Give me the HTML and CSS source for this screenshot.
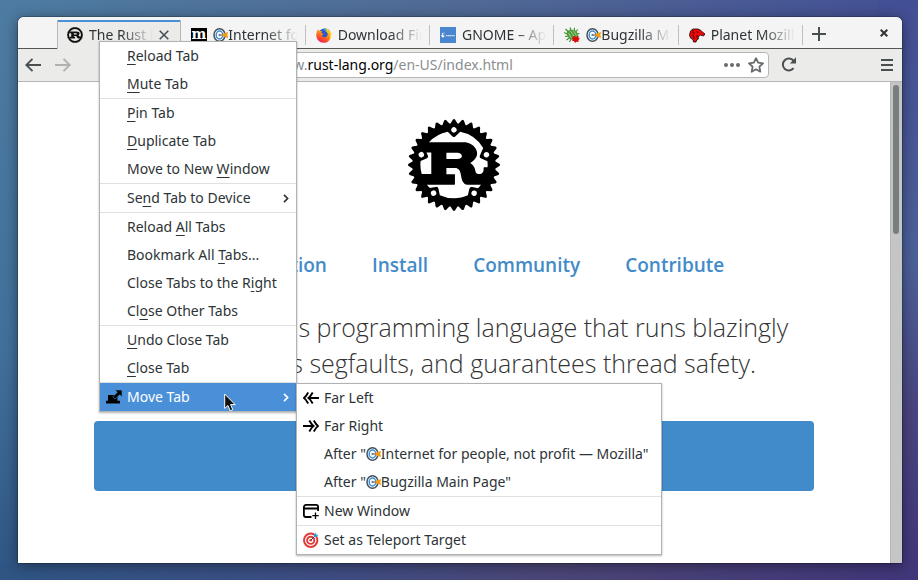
FILE: index.html
```html
<!DOCTYPE html>
<html lang="en">
<head>
<meta charset="utf-8">
<title>The Rust Programming Language</title>
<link rel="stylesheet" href="styles.css">
</head>
<body>
<svg class="defs" aria-hidden="true">
  <symbol id="rust" viewBox="0 0 24 24"><path d="M23.8346 11.7033l-1.0073-.6236a13.7268 13.7268 0 00-.0283-.2936l.8656-.8069a.3483.3483 0 00-.1154-.578l-1.1066-.414a8.4958 8.4958 0 00-.087-.2856l.6904-.9587a.3462.3462 0 00-.2257-.5446l-1.1663-.1894a9.3574 9.3574 0 00-.1407-.2622l.49-1.0761a.3437.3437 0 00-.0274-.3361.3486.3486 0 00-.3006-.154l-1.1845.0416a6.7444 6.7444 0 00-.1873-.2268l.2723-1.153a.3472.3472 0 00-.417-.4172l-1.1532.2724a14.0183 14.0183 0 00-.2278-.1873l.0415-1.1845a.3442.3442 0 00-.49-.328l-1.076.491c-.0872-.0476-.1742-.0952-.2623-.1407l-.1903-1.1673A.3483.3483 0 0016.256.955l-.9597.6905a8.4867 8.4867 0 00-.2855-.086l-.414-1.1066a.3483.3483 0 00-.5781-.1154l-.8069.8666a9.2936 9.2936 0 00-.2936-.0284L12.2946.1683a.3462.3462 0 00-.5892 0l-.6236 1.0073a13.7383 13.7383 0 00-.2936.0284L9.9803.3374a.3462.3462 0 00-.578.1154l-.4141 1.1065c-.0962.0274-.1903.0567-.2855.086L7.744.955a.3483.3483 0 00-.5447.2258L7.009 2.348a9.3574 9.3574 0 00-.2622.1407l-1.0762-.491a.3462.3462 0 00-.49.328l.0416 1.1845a7.9826 7.9826 0 00-.2278.1873L3.8413 3.425a.3472.3472 0 00-.4171.4171l.2713 1.1531c-.0628.075-.1255.1509-.1863.2268l-1.1845-.0415a.3462.3462 0 00-.328.49l.491 1.0761a9.167 9.167 0 00-.1407.2622l-1.1662.1894a.3483.3483 0 00-.2258.5446l.6904.9587a13.303 13.303 0 00-.087.2855l-1.1065.414a.3483.3483 0 00-.1155.5781l.8656.807a9.2936 9.2936 0 00-.0283.2935l-1.0073.6236a.3442.3442 0 000 .5892l1.0073.6236c.008.0982.0182.1964.0283.2936l-.8656.8079a.3462.3462 0 00.1155.578l1.1065.4141c.0273.0962.0567.1914.087.2855l-.6904.9587a.3452.3452 0 00.2268.5447l1.1662.1893c.0456.088.0922.1751.1408.2622l-.491 1.0762a.3462.3462 0 00.328.49l1.1834-.0415c.0618.0769.1235.1528.1873.2277l-.2713 1.1541a.3462.3462 0 00.4171.4161l1.153-.2713c.075.0638.151.1255.2279.1863l-.0415 1.1845a.3442.3442 0 00.49.327l1.0761-.49c.087.0486.1741.0951.2622.1407l.1903 1.1662a.3483.3483 0 00.5447.2268l.9587-.6904a9.299 9.299 0 00.2855.087l.414 1.1066a.3452.3452 0 00.5781.1154l.8079-.8656c.0972.0111.1954.0203.2936.0294l.6236 1.0073a.3472.3472 0 00.5892 0l.6236-1.0073c.0982-.0091.1964-.0183.2936-.0294l.8069.8656a.3483.3483 0 00.578-.1154l.4141-1.1066a8.4626 8.4626 0 00.2855-.087l.9587.6904a.3452.3452 0 00.5447-.2268l.1903-1.1662c.088-.0456.1751-.0931.2622-.1407l1.0762.49a.3472.3472 0 00.49-.327l-.0415-1.1845a6.7267 6.7267 0 00.2267-.1863l1.1531.2713a.3472.3472 0 00.4171-.416l-.2713-1.1542c.0628-.0749.1255-.1508.1863-.2278l1.1845.0415a.3442.3442 0 00.328-.49l-.49-1.076c.0475-.0872.0951-.1742.1407-.2623l1.1662-.1893a.3483.3483 0 00.2258-.5447l-.6904-.9587.087-.2855 1.1066-.414a.3462.3462 0 00.1154-.5781l-.8656-.8079c.0101-.0972.0202-.1954.0283-.2936l1.0073-.6236a.3442.3442 0 000-.5892zm-6.7413 8.3551a.7138.7138 0 01.2986-1.396.714.714 0 11-.2997 1.396zm-.3422-2.3142a.649.649 0 00-.7715.5l-.3573 1.6685c-1.1035.501-2.3285.7795-3.6193.7795a8.7368 8.7368 0 01-3.6951-.814l-.3574-1.6684a.648.648 0 00-.7714-.499l-1.473.3158a8.7216 8.7216 0 01-.7613-.898h7.1676c.081 0 .1356-.0141.1356-.088v-2.536c0-.074-.0536-.0881-.1356-.0881h-2.0966v-1.6077h2.2677c.2065 0 1.1065.0587 1.394 1.2088.0901.3533.2875 1.5044.4232 1.8729.1346.413.6833 1.2381 1.2685 1.2381h3.5716a.7492.7492 0 00.1296-.0131 8.7874 8.7874 0 01-.8119.9526zM6.8369 20.024a.714.714 0 11-.2997-1.396.714.714 0 01.2997 1.396zM4.1177 8.9972a.7137.7137 0 11-1.304.5791.7137.7137 0 011.304-.579zm-.8352 1.9813l1.5347-.6824a.65.65 0 00.33-.8585l-.3158-.7147h1.2432v5.6025H3.5669a8.7753 8.7753 0 01-.2834-3.348zm6.7343-.5437V8.7836h2.9601c.153 0 1.0792.1772 1.0792.8697 0 .575-.7107.7815-1.2948.7815zm10.7574 1.4862c0 .2187-.008.4363-.0243.651h-.9c-.09 0-.1265.0586-.1265.1477v.413c0 .973-.5487 1.1846-1.0296 1.2382-.4576.0517-.9648-.1913-1.0275-.4717-.2704-1.5186-.7198-1.8436-1.4305-2.4034.8817-.5599 1.799-1.386 1.799-2.4915 0-1.1936-.819-1.9458-1.3769-2.3153-.7825-.5163-1.6491-.6195-1.883-.6195H5.4682a8.7651 8.7651 0 014.907-2.7699l1.0974 1.151a.648.648 0 00.9182.0213l1.227-1.1743a8.7753 8.7753 0 016.0044 4.2762l-.8403 1.8982a.652.652 0 00.33.8585l1.6178.7188c.0283.2875.0425.577.0425.8717zm-9.3006-9.5993a.7128.7128 0 11.984 1.0316.7137.7137 0 01-.984-1.0316zm8.3389 6.71a.7107.7107 0 01.9395-.3625.7137.7137 0 11-.9405.3635z"/></symbol>
  <symbol id="rust-small" viewBox="0 0 16 16">
    <circle cx="8" cy="8" r="6.8" fill="none" stroke="#111" stroke-width="1.7"/>
    <circle cx="8" cy="8" r="7.6" fill="none" stroke="#111" stroke-width=".8" stroke-dasharray=".9 .7"/>
    <path fill="#111" fill-rule="evenodd" d="M2.5 4.6h7.2c1.800 0 2.900.7 2.900 1.900 0 .9-.6 1.500-1.300 1.800.8.400.9 1.200 1.500 1.300h1.200v1.800h-2.900c-1.200 0-1.300-2-2.200-2.300H6.800v.7h1.300v1.600H2.700V9.800h1.500V6.300H2.300zM6.800 6.200v1.300h2.400c.9 0 .9-1.300 0-1.300z"/>
  </symbol>
  <symbol id="dart" viewBox="0 0 15 16">
    <ellipse cx="6.500" cy="8" rx="5.500" ry="6.300" fill="#fff" stroke="#46525c" stroke-width="1.500"/>
    <ellipse cx="6.500" cy="8" rx="3.300" ry="3.900" fill="#fff" stroke="#3d8fd6" stroke-width="1.500"/>
    <circle cx="6.500" cy="8" r="1.300" fill="#6fb1e6"/>
    <path d="M6 8h4" stroke="#8d4b42"/>
    <path d="M9 8l2-2.300 1 .9 2.800-1.900v2.200l-.8 1.100.8 1.100v2.200L12 9.400l-1 .9z" fill="#f39c12"/>
  </symbol>
  <symbol id="chevron" viewBox="0 0 6 9"><path d="M1 .8l3.600 3.700L1 8.200" fill="none" stroke="currentColor" stroke-width="1.700"/></symbol>
</svg>

<div class="window">
  <header class="tabbar">
    <div class="tabs" role="tablist">
      <div class="tab active" role="tab" aria-selected="true">
        <svg class="icon"><use href="#rust-small"/></svg>
        <span class="label">The Rust Programming</span>
        <button class="close-tab" aria-label="Close tab"><svg width="10" height="10" viewBox="0 0 10 10"><path d="M.7.700l8.600 8.600M9.300.7L.7 9.300" stroke="#4a4f51" stroke-width="1.600"/></svg></button>
      </div>
      <div class="tab" role="tab">
        <svg class="icon" viewBox="0 0 16 16"><path d="M0 1h16v14H0z"/><text x="8" y="12" text-anchor="middle" class="m-logo">m</text></svg>
        <span class="label"><svg class="dart"><use href="#dart"/></svg>Internet for people</span>
      </div>
      <div class="tab" role="tab">
        <svg class="icon" viewBox="0 0 16 16">
          <defs><linearGradient id="fx" x1=".8" y1="0" x2=".3" y2="1"><stop offset="0" stop-color="#ffe226"/><stop offset=".4" stop-color="#ff9a16"/><stop offset=".75" stop-color="#ff4a2e"/><stop offset="1" stop-color="#e51a62"/></linearGradient></defs>
          <circle cx="8.500" cy="7.500" r="6" fill="#2b57c8"/><path d="M7 2c2-1 5-.5 6.300 1.500l-3 2z" fill="#3c9be8"/>
          <path d="M2.200 2.200C2.500 3.200 3 3.700 3.600 4c1-.2 1.900 0 2.500.3L5.300 6c.9.500 1.700.6 2.300.9-.4 1-1.500 1.200-1.800 1.600.4 1.800 3.400 2.400 5 .9 1.200-1.200 1.200-3-.2-4.700 0-1.500-.6-2.700-1.500-3.700 2 .3 3.300 1.400 4 2.600.900.300 1.500 1 2 2.300.8 5.500-2.600 9.900-7.300 9.900-4.300 0-7.500-3.500-7.500-7.500 0-2.600.8-4.900 1.900-6.100z" fill="url(#fx)"/>
          <path d="M13.300 3.700c.8.300 1.500 1 1.900 2.300.5 2.600-.4 5.300-1.700 6.800.9-3.200.6-6.500-.2-9.100z" fill="#ffe12b"/>
        </svg>
        <span class="label">Download Firefox</span>
      </div>
      <div class="tab" role="tab">
        <svg class="icon" viewBox="0 0 16 16"><path d="M0 0h16v16H0z" fill="#4a86cf"/><path d="M1.800 9.800c-1-1.300-.2-2.600 1-2.500 1 .1.900 1.200.2 1.400L4.600 8.600c.1 1-.9 2.100-2 1.900z" fill="#fff"/><circle cx="2.600" cy="6.300" r=".6" fill="#fff"/><circle cx="4" cy="6" r=".5" fill="#fff"/><path d="M6 8.600h9" stroke="#d8e6f6" stroke-width="1.400" stroke-dasharray="1.400 .4"/></svg>
        <span class="label">GNOME – Apps</span>
      </div>
      <div class="tab" role="tab">
        <svg class="icon" viewBox="0 0 16 16"><path d="M1.500 2l3 3M6 .5l1.500 4M10.500.8l-.5 4M13.800 2.500l-3 3.500M0 5.500l4 2M15.500 6.500l-4 .5M1 9.500l4-.5M2.500 13l4-3M5.500 15l2-4" stroke="#3c8d2c" stroke-width="1.100"/><path d="M3 4.500C5 2.500 9 2 11.500 3.500c2 1.500 3.500 5 2.500 8-3 2-7 1.800-9-.5-2-2-3-4.500-2-6.500z" fill="#4f9c3c"/><path d="M4.500 6l3 5M6.500 4l4 6M9.500 3.700l3 5" stroke="#a5d18c" stroke-width="1"/><path d="M8 10.500l2-1.500 2 1 2.500-1v2l1.500.5-1.500 1.500v2l-2-.3-1.500 1.300-1-2H8l.8-1.700z" fill="#e00b0b"/></svg>
        <span class="label"><svg class="dart"><use href="#dart"/></svg>Bugzilla Main Page</span>
      </div>
      <div class="tab" role="tab">
        <svg class="icon" viewBox="0 0 16 16"><path d="M1.500 4L4 2h5l3 1.500 2 2 2 1.500-1.500 2L11.500 8 9 10l.5 2-1.500.500-1 2.500H4.500L4 12.500 1.500 11 .5 8z" fill="#ee0808" stroke="#160000" stroke-width=".8"/><path d="M4 3v3h2M8 4l1 2M3 8l2 1v3M8 8v3" stroke="#5b0000" fill="none"/></svg>
        <span class="label">Planet Mozilla</span>
      </div>
    </div>
    <button class="new-tab" aria-label="New tab"><svg width="14" height="14" viewBox="0 0 14 14"><path d="M7 0v14M0 7h14" stroke="#4a4f51" stroke-width="2"/></svg></button>
    <button class="close-window" aria-label="Close window"><svg width="8" height="8" viewBox="0 0 8 8"><path d="M.7.700l6.600 6.600M7.300.7L.7 7.300" stroke="#2e3436" stroke-width="2"/></svg></button>
  </header>

  <nav class="toolbar">
    <button aria-label="Back"><svg width="16" height="14" viewBox="0 0 16 14"><path d="M16 7H1.500M7.500.8L1.300 7l6.200 6.200" fill="none" stroke="#4a4f51" stroke-width="1.900"/></svg></button>
    <button aria-label="Forward" disabled><svg width="16" height="14" viewBox="0 0 16 14"><path d="M0 7h14.500M8.500.8L14.700 7l-6.200 6.200" fill="none" stroke="#b0b1b0" stroke-width="1.900"/></svg></button>
    <div class="urlbar">
      <div class="url" role="textbox" aria-label="Address" contenteditable="true" spellcheck="false">https://www.<b>rust-lang.org</b>/en-US/index.html</div>
      <button aria-label="Page actions"><svg width="16" height="4" viewBox="0 0 16 4"><path d="M2 2h0M8 2h0M14 2h0" stroke="#666b6d" stroke-width="4" stroke-linecap="round"/></svg></button>
      <button aria-label="Bookmark this page"><svg width="16" height="16" viewBox="0 0 16 16"><path d="M8 1.200l2.100 4.500 4.900.6-3.600 3.400.9 5L8 12.300l-4.300 2.400.9-5L1 6.300l4.900-.6z" fill="none" stroke="#666b6d" stroke-width="1.800" stroke-linejoin="round"/></svg></button>
    </div>
    <button class="reload" aria-label="Reload"><svg width="16" height="15" viewBox="0 0 16 15"><path d="M12.600 11.200A6 6 0 1 1 12.500 3.700" fill="none" stroke="#4a4f51" stroke-width="2"/><path d="M15 .3v6.200H8.800z" fill="#4a4f51"/></svg></button>
    <button class="menu-button" aria-label="Open menu"><svg width="12" height="12" viewBox="0 0 12 12"><path d="M0 1h12M0 6h12M0 11h12" stroke="#4a4f51" stroke-width="2"/></svg></button>
  </nav>

  <div class="viewport">
    <main class="page">
      <svg class="logo" role="img" aria-label="Rust"><use href="#rust"/></svg>
      <nav class="links">
        <a href="#">Documentation</a>
        <a href="#">Install</a>
        <a href="#">Community</a>
        <a href="#">Contribute</a>
      </nav>
      <p class="tagline">Rust is a systems programming language that runs blazingly<br>fast, prevents segfaults, and guarantees thread safety.</p>
      <button class="install" aria-label="Install Rust"></button>
    </main>
    <div class="scrollbar"><div class="thumb"></div></div>
  </div>

  <div class="menu context" role="menu">
    <button role="menuitem"><span><u>R</u>eload Tab</span></button>
    <button role="menuitem"><span><u>M</u>ute Tab</span></button>
    <hr>
    <button role="menuitem"><span><u>P</u>in Tab</span></button>
    <button role="menuitem"><span><u>D</u>uplicate Tab</span></button>
    <button role="menuitem"><span>Move to New <u>W</u>indow</span></button>
    <hr>
    <button role="menuitem"><span>Se<u>n</u>d Tab to Device</span><svg class="chevron"><use href="#chevron"/></svg></button>
    <hr>
    <button role="menuitem"><span>Reload <u>A</u>ll Tabs</span></button>
    <button role="menuitem"><span>Bookmark All <u>T</u>abs...</span></button>
    <button role="menuitem"><span>Close Tabs to the R<u>i</u>ght</span></button>
    <button role="menuitem"><span>Cl<u>o</u>se Other Tabs</span></button>
    <hr>
    <button role="menuitem"><span><u>U</u>ndo Close Tab</span></button>
    <button role="menuitem"><span><u>C</u>lose Tab</span></button>
    <hr>
    <div class="parent">
      <button role="menuitem" class="selected" aria-haspopup="true" aria-expanded="true">
        <svg class="icon" viewBox="0 0 16 16"><path d="M2 6h9.500v5.800H14v2.700H0v-2.700h2z"/><path d="M9 1h7v7l-2.300-2.300-4.500 4.500-2.400-2.400 4.500-4.500z" stroke="#4a90d9" stroke-width=".6"/></svg>
        <span>Move Tab</span><svg class="chevron"><use href="#chevron"/></svg>
      </button>
      <svg class="pointer" viewBox="0 0 12 19"><path d="M.7 1v14.500l3.200-3 2.300 5.300 2.600-1.100-2.200-5.100h4.600z" fill="#111" stroke="#fff"/></svg>
      <div class="menu submenu" role="menu">
        <button role="menuitem"><svg class="icon" viewBox="0 0 16 16"><path d="M5.200 2.500C3.500 5.500 2.500 7 1 8c1.500 1 2.500 2.500 4.200 5.500M9.700 2.500C8 5.500 7 7 5.500 8 7 9 8 10.500 9.700 13.500M6 8h10" fill="none" stroke="#000" stroke-width="1.900"/></svg><span>Far Left</span></button>
        <button role="menuitem"><svg class="icon" viewBox="0 0 16 16"><path d="M10.800 2.500C12.500 5.500 13.500 7 15 8c-1.500 1-2.500 2.500-4.200 5.500M6.300 2.500C8 5.500 9 7 10.500 8 9 9 8 10.500 6.300 13.500M10 8H0" fill="none" stroke="#000" stroke-width="1.900"/></svg><span>Far Right</span></button>
        <button role="menuitem"><span>After "<svg class="dart"><use href="#dart"/></svg>Internet for people, not profit — Mozilla"</span></button>
        <button role="menuitem"><span>After "<svg class="dart"><use href="#dart"/></svg>Bugzilla Main Page"</span></button>
        <hr>
        <button role="menuitem"><svg class="icon" viewBox="0 0 16 16"><path d="M8.500 14H3A2.100 2.100 0 0 1 .9 11.900V4A2.100 2.100 0 0 1 3 1.900h10A2.100 2.100 0 0 1 15.100 4v4M1 5.500h14" fill="none" stroke="#000" stroke-width="1.800"/><path d="M12.500 9.500v6.500M9.300 12.700h6.400" stroke="#000" stroke-width="1.300"/></svg><span>New Window</span></button>
        <hr>
        <button role="menuitem"><svg class="icon" viewBox="0 0 16 16"><circle cx="7.700" cy="8.300" r="6.700" fill="#fff" stroke="#e13b38" stroke-width="2"/><circle cx="7.700" cy="8.300" r="3.600" fill="#fff" stroke="#e13b38" stroke-width="1.900"/><circle cx="7.700" cy="8.300" r="1.300" fill="#e13b38"/><path d="M7.700 8.300l4.500-4.500" stroke="#33424a" stroke-width="1"/><path d="M11 5V2.800L13.200.6v2.200h2.300L13.300 5z" fill="#27a3d6"/></svg><span>Set as Teleport Target</span></button>
      </div>
    </div>
  </div>
</div>
</body>
</html>
```
FILE: styles.css
```css
* { box-sizing: border-box; }

body {
  margin: 0;
  min-height: 100vh;
  padding: 17px 16px 17px 18px;
  display: flex;
  font-family: "Noto Sans", "Open Sans", sans-serif;
  font-size: 14px;
  color: #2e3436;
  background:
    linear-gradient(to right, #2f5584 0%, #3d4d83 35%, #4b4677 60%, #40367a 100%) bottom / 100% 17px no-repeat,
    linear-gradient(to bottom, #434f94 0%, #4c6199 45%, #4a4580 70%, #40367a 100%) right / 40px 100% no-repeat,
    linear-gradient(to bottom, #4d7ba1, #41709b 60%, #2f5584) left / 40px 100% no-repeat,
    linear-gradient(to right, #4d7ba1, #506a95 50%, #434f94);
}

button {
  margin: 0;
  padding: 0;
  border: 0;
  background: none;
  font: inherit;
  color: inherit;
  display: flex;
  align-items: center;
}

svg { display: block; flex: none; }
.defs { position: absolute; width: 0; height: 0; }
.icon { width: 16px; height: 16px; }
.m-logo { font: bold 14px "DejaVu Serif", serif; fill: #fff; }

.window {
  position: relative;
  flex: 1;
  min-width: 0;
  display: flex;
  flex-direction: column;
  background: #fff;
  border-radius: 6px 6px 0 0;
  box-shadow: 0 0 0 1px rgba(0, 0, 0, .2), 0 2px 14px rgba(0, 0, 0, .45);
}

.tabbar {
  height: 32px;
  display: flex;
  padding-left: 39px;
  background: #f4f4f4;
  border-bottom: 1px solid #55574f;
  border-radius: 6px 6px 0 0;
}

.tabs {
  flex: 1;
  min-width: 0;
  display: grid;
  grid-template-columns: repeat(6, minmax(0, 1fr));
}

.tab {
  position: relative;
  padding: 4px 8px 0 10px;
  display: flex;
  align-items: center;
  gap: 6px;
}

.tab::after {
  content: "";
  width: 1px;
  height: 20px;
  position: absolute;
  right: 0;
  top: 8px;
  background: #c0c0be;
}

.tab.active {
  margin: 3px 0 -1px;
  padding: 0 11px 0 9px;
  background: #ebebe9;
  border: solid #b6b6b3;
  border-width: 0 1px;
  box-shadow: inset 0 2px #4a90d9;
}
.tab.active::after { display: none; }

.label {
  flex: 1;
  min-width: 0;
  overflow: hidden;
  white-space: nowrap;
  line-height: 22px;
  -webkit-mask-image: linear-gradient(to left, transparent, #000 32px);
  mask-image: linear-gradient(to left, transparent, #000 32px);
}

.dart {
  display: inline-block;
  width: 15px;
  height: 16px;
  vertical-align: -3px;
}

.new-tab { width: 58px; padding: 3px 0 0 9px; }
.close-window { width: 41px; padding: 1px 0 0 19px; }

.toolbar {
  height: 33px;
  padding: 0 9px 1px 7px;
  display: flex;
  align-items: center;
  gap: 14px;
  background: #ebebe9;
  border-bottom: 1px solid #b6b6b3;
}

.urlbar {
  flex: 1;
  margin: 0 -2px 0 20px;
  height: 26px;
  padding: 0 4px 0 117px;
  display: flex;
  align-items: center;
  gap: 8px;
  background: #fff;
  border: 1px solid #b6b6b3;
  border-radius: 4px;
}

.url { flex: 1; color: #8b8e8f; white-space: nowrap; outline: none; }
.url b { font-weight: normal; color: #000; }
.reload { width: 86px; }

.viewport { flex: 1; display: flex; }

.page {
  flex: 1;
  display: flex;
  flex-direction: column;
  align-items: center;
  padding: 37px 76px 0;
}

.logo { width: 92px; height: 92px; }

.links {
  display: flex;
  gap: 45px;
  margin-top: 38px;
  font: 600 19px/32px "Open Sans", sans-serif;
}
.links a { color: #428bca; text-decoration: none; }

.tagline {
  margin: 28px 0 0;
  font: 300 25px/36px "Open Sans", sans-serif;
  color: #333;
  text-align: center;
  white-space: nowrap;
}

.install {
  width: 100%;
  height: 70px;
  margin-top: 40px;
  background: #428bca;
  border-radius: 4px;
}

.scrollbar {
  width: 12px;
  padding: 3px 3px 0 2px;
  background: #c4c6c5;
  border-left: 1px solid #b4b6b5;
}
.thumb { height: 149px; width: 6px; border-radius: 3px; background: #787d7e; }

.menu {
  position: absolute;
  background: #fff;
  border: 1px solid #b1b3b2;
  box-shadow: 0 1px 2px rgba(0, 0, 0, .3);
}
.menu button {
  width: 100%;
  height: 28px;
  padding-left: 27px;
  text-align: left;
  white-space: nowrap;
}
.menu span { flex: 1; padding-bottom: 2px; }
.menu .icon { margin: 0 5px 0 -21px; }
.menu hr { margin: 0; border: 0; height: 1px; background: #e0e0e0; }
.menu u { text-decoration-thickness: 1px; text-underline-offset: 3px; }

.context { left: 81px; top: 24px; width: 198px; }
.parent { position: relative; }
.menu .selected { background: #4a90d9; color: #fff; }
.chevron { width: 6px; height: 9px; margin-right: 7px; }
.submenu { left: 196px; top: 0; width: 366px; color: #2e3436; }
.pointer { position: absolute; left: 124px; top: 10px; width: 12px; height: 19px; }
```
